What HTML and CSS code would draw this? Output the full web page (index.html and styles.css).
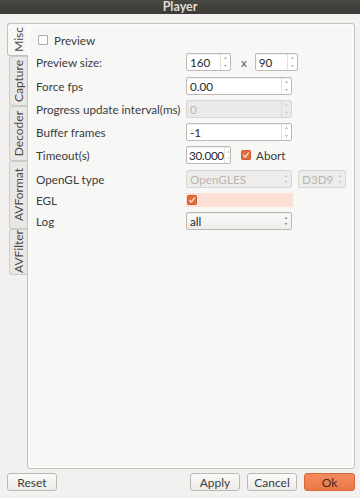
FILE: index.html
```html
<!DOCTYPE html>
<html lang="en">
<head>
  <meta charset="UTF-8" />
  <title>Player</title>
  <link rel="stylesheet" href="styles.css">
</head>
<body>
  <div class="titlebar">Player</div>

  <div class="main">
    <div class="tabwidget">
      <div class="tabs">
        <div class="tab active"><span>Misc</span></div>
        <div class="tab t-capture"><span>Capture</span></div>
        <div class="tab t-decoder"><span>Decoder</span></div>
        <div class="tab t-avformat"><span>AVFormat</span></div>
        <div class="tab t-avfilter"><span>AVFilter</span></div>
      </div>

      <div class="pane">
        <div class="form">
          <label class="check-row"><span class="cb"></span>Preview</label>
          <div></div>

          <div class="lbl">Preview size:</div>
          <div class="ctl">
            <div class="spin small"><span class="val">160</span><svg class="arrows" viewBox="0 0 10 16"><path d="M4 4.5l1-1.5 1 1.5M4 11.5l1 1.5 1-1.5"/></svg></div>
            <span class="times">x</span>
            <div class="spin small2"><span class="val">90</span><svg class="arrows" viewBox="0 0 10 16"><path d="M4 4.5l1-1.5 1 1.5M4 11.5l1 1.5 1-1.5"/></svg></div>
          </div>

          <div class="lbl">Force fps</div>
          <div class="ctl"><div class="spin wide"><span class="val">0.00</span><svg class="arrows" viewBox="0 0 10 16"><path d="M4 4.5l1-1.5 1 1.5M4 11.5l1 1.5 1-1.5"/></svg></div></div>

          <div class="lbl">Progress update interval(ms)</div>
          <div class="ctl"><div class="spin wide disabled"><span class="val">0</span><svg class="arrows" viewBox="0 0 10 16"><path d="M4 4.5l1-1.5 1 1.5M4 11.5l1 1.5 1-1.5"/></svg></div></div>

          <div class="lbl">Buffer frames</div>
          <div class="ctl"><div class="spin wide"><span class="val">-1</span><svg class="arrows" viewBox="0 0 10 16"><path d="M4 4.5l1-1.5 1 1.5M4 11.5l1 1.5 1-1.5"/></svg></div></div>

          <div class="lbl">Timeout(s)</div>
          <div class="ctl">
            <div class="spin timeout"><span class="val">30.000</span><svg class="arrows" viewBox="0 0 10 16"><path d="M4 4.5l1-1.5 1 1.5M4 11.5l1 1.5 1-1.5"/></svg></div>
            <label class="abort"><svg class="cb-on" viewBox="0 0 10 10"><rect x="0.5" y="0.5" width="9" height="9" rx="1"/><path d="M2.3 5l2 2 3.6-4.4"/></svg>Abort</label>
          </div>

          <div class="lbl">OpenGL type</div>
          <div class="ctl">
            <div class="combo wide disabled"><span class="val">OpenGLES</span><svg class="carets" viewBox="0 0 10 16"><path d="M4 6l1-1.5 1 1.5M4 10l1 1.5 1-1.5"/></svg></div>
            <div class="combo d3d disabled"><span class="val">D3D9</span><svg class="carets" viewBox="0 0 10 16"><path d="M4 6l1-1.5 1 1.5M4 10l1 1.5 1-1.5"/></svg></div>
          </div>

          <div class="lbl">EGL</div>
          <div class="ctl"><div class="egl"><svg class="cb-on" viewBox="0 0 10 10"><rect x="0.5" y="0.5" width="9" height="9" rx="1"/><path d="M2.3 5l2 2 3.6-4.4"/></svg></div></div>

          <div class="lbl">Log</div>
          <div class="ctl"><div class="combo wide"><span class="val">all</span><svg class="carets" viewBox="0 0 10 16"><path d="M4 6l1-1.5 1 1.5M4 10l1 1.5 1-1.5"/></svg></div></div>
        </div>
      </div>
    </div>

    <div class="buttons">
      <button class="btn">Reset</button>
      <div class="spacer"></div>
      <button class="btn">Apply</button>
      <button class="btn">Cancel</button>
      <button class="btn ok">Ok</button>
    </div>
  </div>
</body>
</html>
```

FILE: styles.css
```css
:root {
  --bg: #f2f1f0;
  --pane: #f7f7f6;
  --border: #c4c1bc;
  --text: #3c3c3c;
}

* { box-sizing: border-box; margin: 0; padding: 0; }

body {
  width: 360px;
  height: 498px;
  background: var(--bg);
  font-family: Lato, "Open Sans", sans-serif;
  font-size: 11.7px;
  color: var(--text);
  overflow: hidden;
}

.titlebar {
  height: 14px;
  line-height: 13px;
  background: linear-gradient(#4a4944, #3a3935);
  color: #dfdbd2;
  font-weight: bold;
  font-size: 12.5px;
  text-align: center;
}

.main {
  padding: 9px 5px 0 7px;
}

.tabwidget {
  display: flex;
  height: 446px;
}

.tabs {
  width: 20px;
  display: flex;
  flex-direction: column;
}

.tab {
  margin-left: 2px;
  background: #e9e8e6;
  border: 1px solid #cfccc8;
  border-right: none;
  border-radius: 3px 0 0 3px;
  display: flex;
  align-items: center;
  justify-content: center;
  color: #4a4a4a;
  font-size: 12px;
}

.tab span {
  writing-mode: vertical-rl;
  transform: rotate(180deg);
  line-height: 17px;
}

.tab.active {
  margin-left: 0;
  height: 33px;
  background: var(--pane);
  border-color: var(--border);
  position: relative;
  z-index: 1;
  margin-right: -1px;
}

.t-capture { height: 50px; }
.t-decoder { height: 55px; }
.t-avformat { height: 68px; }
.t-avfilter { height: 46px; }

.pane {
  flex: 1;
  background: var(--pane);
  border: 1px solid var(--border);
  border-radius: 0 3px 3px 3px;
  box-shadow: inset 0 0 0 2px #fbfbfa;
  padding: 8px 0 0 8px;
}

.form {
  display: grid;
  grid-template-columns: 150px 1fr;
  grid-template-rows: 16px 18px 18px 18px 18px 18px 18px 14px 18px;
  row-gap: 5.3px;
  align-items: center;
}

.lbl { white-space: nowrap; }

.ctl {
  display: flex;
  align-items: center;
  height: 100%;
}

.check-row {
  display: flex;
  align-items: center;
  gap: 6px;
  padding-left: 2px;
}

.cb {
  display: inline-block;
  width: 10px;
  height: 10px;
  border: 1px solid #aaa7a2;
  border-radius: 1px;
  background: #fff;
}

.cb-on {
  width: 10px;
  height: 10px;
  flex: none;
}

.cb-on rect {
  fill: #e46b3a;
  stroke: #cf5b2c;
}

.cb-on path {
  fill: none;
  stroke: #f8e0d4;
  stroke-width: 1.4;
}

.spin, .combo {
  height: 18px;
  border: 1px solid #bdbab5;
  border-radius: 2px;
  background: #fff;
  display: flex;
  align-items: center;
  box-shadow: inset 0 1px 1px rgba(0,0,0,0.06);
}

.spin .val, .combo .val {
  flex: 1;
  padding-left: 3px;
  color: #2a2a2a;
  white-space: nowrap;
  overflow: hidden;
}

.arrows, .carets {
  width: 10px;
  height: 16px;
  flex: none;
}

.arrows { border-left: 1px solid #e4e2df; }

.arrows path, .carets path {
  fill: none;
  stroke: #8d8a85;
  stroke-width: 1;
}

.spin.small { width: 45px; }
.spin.small2 { width: 43px; }
.spin.wide, .combo.wide { width: 106px; }
.spin.timeout { width: 45px; }
.spin.timeout .val { padding-left: 2px; letter-spacing: -0.3px; overflow: visible; }
.spin.timeout .arrows { width: 8px; }

.times {
  margin: 0 8px 0 10px;
  color: #555;
}

.spin.disabled {
  background: #ebeae9;
  border-color: #d8d6d2;
  box-shadow: none;
}

.spin.disabled .val { color: #b9b6b2; }
.spin.disabled .arrows { border-color: #dedcd9; }
.disabled path { stroke: #c4c1bd; }

.combo {
  background: linear-gradient(#fbfbfa, #eeedeb);
}

.combo.disabled {
  background: #eeedeb;
  border-color: #d8d6d2;
  box-shadow: none;
}

.combo.disabled .val { color: #b9b6b2; }

.combo.d3d {
  width: 48px;
  margin-left: 6px;
}

.abort {
  display: flex;
  align-items: center;
  gap: 5px;
  margin-left: 10px;
}

.egl {
  width: 107px;
  height: 14px;
  background: #fde0d6;
  display: flex;
  align-items: center;
  padding-left: 1px;
}

.buttons {
  display: flex;
  gap: 7px;
  margin-top: 4px;
}

.spacer { flex: 1; }

.btn {
  width: 50px;
  height: 18px;
  font-family: inherit;
  font-size: 12px;
  color: var(--text);
  background: linear-gradient(#fafaf9, #ecebe9);
  border: 1px solid #bcb9b4;
  border-radius: 3px;
}

.btn.ok {
  width: 51px;
  background: linear-gradient(#f48c60, #ec7646);
  border-color: #d9683b;
  color: #3a2a22;
}
```
